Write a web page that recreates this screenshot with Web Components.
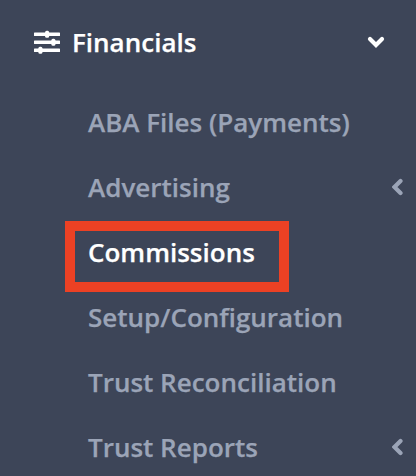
<!DOCTYPE html>
<html lang="en"><head><meta charset="utf-8"><title>Financials</title>
<style>html,body{margin:0;height:100%;overflow:hidden;background:#3d4558}</style></head><body>
<side-menu>
<menu-heading>Financials</menu-heading>
<menu-item>ABA Files (Payments)</menu-item>
<menu-item expandable>Advertising</menu-item>
<menu-item active>Commissions</menu-item>
<menu-item>Setup/Configuration</menu-item>
<menu-item>Trust Reconciliation</menu-item>
<menu-item expandable>Trust Reports</menu-item>
</side-menu>
<script>
const define=(name,html)=>customElements.define(name,class extends HTMLElement{
 constructor(){super();this.attachShadow({mode:'open'}).innerHTML=html;}
});
define('side-menu',`<style>:host{display:flex;flex-direction:column;width:416px;height:476px;overflow:hidden;background:#3d4558;font:600 26px "Open Sans",sans-serif;color:#9ba4b7;-webkit-text-stroke:.25px currentColor}</style><slot></slot>`);
define('menu-heading',`<style>:host{display:flex;align-items:center;height:84px;padding:0 31px 0 34px;box-sizing:border-box;color:#fff;flex:none;margin-bottom:5px}.label{margin-left:12px;flex:1;white-space:nowrap}svg{flex:none}</style>
<svg width="26" height="24" viewBox="0 0 26 24" fill="#fff"><rect y="2.400" width="26" height="3.600" rx=".6"/><rect y="10.400" width="26" height="3.600" rx=".6"/><rect y="18.400" width="26" height="3.600" rx=".6"/><rect x="11.100" y=".7" width="4" height="7" rx="1.500"/><rect x="17.400" y="8.700" width="4" height="7" rx="1.500"/><rect x="4.400" y="16.700" width="4" height="7" rx="1.500"/></svg>
<span class="label"><slot></slot></span><svg width="18" height="12" viewBox="0 0 18 12"><path d="M3 3l6 6 6-6" fill="none" stroke="#fff" stroke-width="4.200" stroke-linecap="round"/></svg>`);
define('menu-item',`<style>:host{display:flex;align-items:center;position:relative;height:65px;padding:0 12px 0 88px;box-sizing:border-box;flex:none}.label{flex:1;white-space:nowrap}svg{display:none}:host([expandable]) svg{display:block}:host([active]){color:#fff}:host([active])::after{content:"";position:absolute;left:65px;top:2px;width:224px;height:71px;box-sizing:border-box;border:10px solid #ec4124}</style>
<span class="label"><slot></slot></span><svg width="12" height="18" viewBox="0 0 12 18"><path d="M8.500 3L2.500 9l6 6" fill="none" stroke="#9ba4b7" stroke-width="4.200" stroke-linecap="round"/></svg>`);
</script></body></html>
